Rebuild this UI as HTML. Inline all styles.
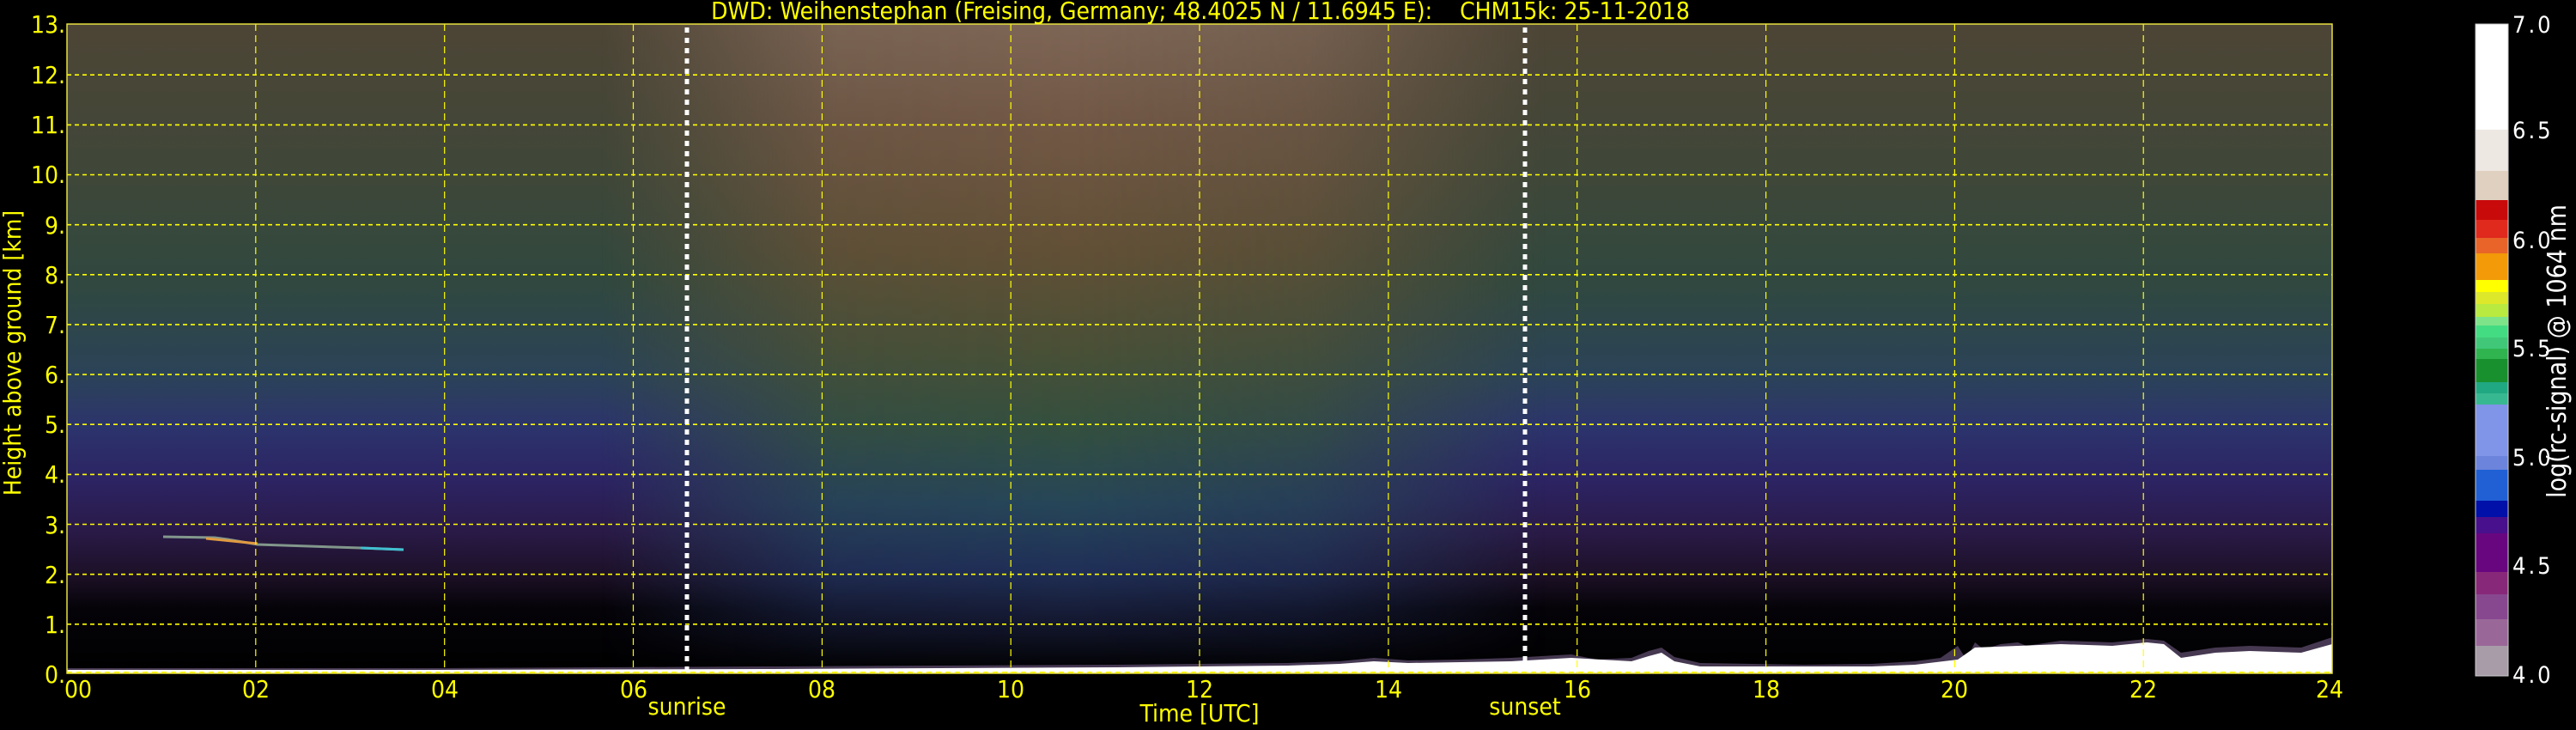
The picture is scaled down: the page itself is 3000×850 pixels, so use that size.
<!DOCTYPE html>
<html><head><meta charset="utf-8"><style>
html,body{margin:0;padding:0;background:#000;width:3000px;height:850px;overflow:hidden}
svg text{font-family:"DejaVu Sans Condensed","DejaVu Sans","Liberation Sans",sans-serif;font-stretch:condensed}
</style></head><body>
<svg width="3000" height="850" viewBox="0 0 3000 850" xmlns="http://www.w3.org/2000/svg">
<defs>
<linearGradient id="bg" x1="0" y1="28" x2="0" y2="784" gradientUnits="userSpaceOnUse">
<stop offset="0" stop-color="#4d4536"/>
<stop offset="0.23" stop-color="#3f4738"/>
<stop offset="0.40" stop-color="#30483f"/>
<stop offset="0.54" stop-color="#2b4358"/>
<stop offset="0.62" stop-color="#2c346c"/>
<stop offset="0.70" stop-color="#2c2464"/>
<stop offset="0.78" stop-color="#2a1a48"/>
<stop offset="0.85" stop-color="#1c1026"/>
<stop offset="0.90" stop-color="#050308"/>
<stop offset="1" stop-color="#000"/>
</linearGradient>
<linearGradient id="cen" x1="0" y1="28" x2="0" y2="784" gradientUnits="userSpaceOnUse">
<stop offset="0" stop-color="#7e6656"/>
<stop offset="0.15" stop-color="#725846"/>
<stop offset="0.35" stop-color="#625036"/>
<stop offset="0.50" stop-color="#4a5036"/>
<stop offset="0.62" stop-color="#34503e"/>
<stop offset="0.74" stop-color="#264658"/>
<stop offset="0.84" stop-color="#203058"/>
<stop offset="0.92" stop-color="#141830"/>
<stop offset="1" stop-color="#000"/>
</linearGradient>
<linearGradient id="hm" x1="700" y1="0" x2="1800" y2="0" gradientUnits="userSpaceOnUse">
<stop offset="0" stop-color="#fff" stop-opacity="0"/>
<stop offset="0.25" stop-color="#fff" stop-opacity="0.9"/>
<stop offset="0.5" stop-color="#fff" stop-opacity="1"/>
<stop offset="0.75" stop-color="#fff" stop-opacity="0.8"/>
<stop offset="1" stop-color="#fff" stop-opacity="0"/>
</linearGradient>
<mask id="m"><rect x="700" y="28" width="1100" height="756" fill="url(#hm)"/></mask>
</defs>

<rect x="78" y="28" width="2638" height="756" fill="url(#bg)"/>
<rect x="700" y="28" width="1100" height="756" fill="url(#cen)" mask="url(#m)"/>

<!-- cloud streak -->
<path d="M190 625 L250 626 L265 628 L300 634 L360 636 L420 638 L470 640" stroke="#9ab8a0" stroke-width="3" fill="none" opacity="0.8"/>
<path d="M240 627 L300 633" stroke="#e09a40" stroke-width="3" fill="none"/>
<path d="M420 638 L470 640" stroke="#40c0d0" stroke-width="3" fill="none"/>

<!-- ground layer -->
<path d="M78 784 L78 778 L500 778 L900 776 L1300 774 L1500 772 L1560 770 L1600 766 L1640 769 L1700 768 L1760 766 L1830 762 L1860 768 L1900 766 L1920 758 L1935 754 L1950 765 L1980 772 L2100 774 L2180 773 L2230 770 L2260 766 L2280 752 L2290 768 L2300 748 L2310 756 L2330 750 L2350 748 L2360 752 L2400 746 L2460 748 L2500 744 L2520 746 L2540 760 L2580 754 L2620 752 L2680 754 L2716 742 L2716 784 Z" fill="#8a70a0" opacity="0.5"/>
<path d="M78 784 L78 780 L500 780 L900 779 L1300 777 L1500 775 L1560 773 L1600 770 L1640 772 L1760 770 L1830 766 L1900 770 L1920 764 L1935 760 L1950 770 L1980 776 L2180 776 L2230 774 L2280 768 L2300 754 L2350 752 L2400 750 L2460 752 L2500 748 L2520 750 L2540 766 L2580 760 L2620 758 L2680 760 L2716 750 L2716 784 Z" fill="#fff"/>

<!-- grid -->
<g stroke="#ffff00" stroke-width="1.6" stroke-dasharray="5 4" fill="none">
<path d="M78 726.8H2716M78 668.7H2716M78 610.5H2716M78 552.4H2716M78 494.2H2716M78 436.1H2716M78 377.9H2716M78 319.8H2716M78 261.7H2716M78 203.5H2716M78 145.4H2716M78 87.2H2716"/>
</g>
<g stroke="#ffff00" stroke-width="1.2" stroke-dasharray="8 5" fill="none">
<path d="M297.8 28V784M517.7 28V784M737.5 28V784M957.4 28V784M1177.2 28V784M1397 28V784M1616.9 28V784M1836.7 28V784M2056.6 28V784M2276.4 28V784M2496.2 28V784"/>
</g>
<path d="M78 783H2716" stroke="#ffff00" stroke-width="2" stroke-dasharray="6 5"/>
<rect x="78" y="28" width="2638" height="756" fill="none" stroke="#e8e040" stroke-width="1.5"/>

<g stroke="#fff" stroke-width="5" stroke-dasharray="6 6">
<path d="M800 32V782"/><path d="M1776 32V782"/>
</g>

<text x="1398" y="22" fill="#ffff00" font-size="28" text-anchor="middle" xml:space="preserve">DWD: Weihenstephan (Freising, Germany; 48.4025 N / 11.6945 E):    CHM15k: 25-11-2018</text>

<g fill="#ffff00" font-size="28" text-anchor="end">
<text x="76" y="38">13.</text><text x="76" y="97">12.</text><text x="76" y="155">11.</text><text x="76" y="213">10.</text>
<text x="76" y="272">9.</text><text x="76" y="330">8.</text><text x="76" y="388">7.</text><text x="76" y="446">6.</text>
<text x="76" y="504">5.</text><text x="76" y="562">4.</text><text x="76" y="621">3.</text><text x="76" y="679">2.</text>
<text x="76" y="737">1.</text><text x="76" y="795">0.</text>
</g>
<text transform="translate(24 411) rotate(-90)" fill="#ffff00" font-size="28" text-anchor="middle">Height above ground [km]</text>

<g fill="#ffff00" font-size="28" text-anchor="middle">
<text x="91" y="812">00</text><text x="298" y="812">02</text><text x="518" y="812">04</text><text x="738" y="812">06</text>
<text x="957" y="812">08</text><text x="1177" y="812">10</text><text x="1397" y="812">12</text><text x="1617" y="812">14</text>
<text x="1837" y="812">16</text><text x="2057" y="812">18</text><text x="2276" y="812">20</text><text x="2496" y="812">22</text>
<text x="2713" y="812">24</text>
<text x="800" y="832">sunrise</text><text x="1776" y="832">sunset</text>
<text x="1397" y="840">Time [UTC]</text>
</g>

<g>
<rect x="2883" y="28" width="38" height="123" fill="#fff"/>
<rect x="2883" y="151" width="38" height="48" fill="#ede8e2"/>
<rect x="2883" y="199" width="38" height="34" fill="#e0d0c0"/>
<rect x="2883" y="233" width="38" height="23" fill="#c80a0a"/>
<rect x="2883" y="256" width="38" height="21" fill="#e02a1e"/>
<rect x="2883" y="277" width="38" height="18" fill="#e86428"/>
<rect x="2883" y="295" width="38" height="31" fill="#f29a08"/>
<rect x="2883" y="326" width="38" height="14" fill="#ffff00"/>
<rect x="2883" y="340" width="38" height="14" fill="#dde82a"/>
<rect x="2883" y="354" width="38" height="15" fill="#b8ea40"/>
<rect x="2883" y="369" width="38" height="10" fill="#7ee48a"/>
<rect x="2883" y="379" width="38" height="14" fill="#44dc82"/>
<rect x="2883" y="393" width="38" height="13" fill="#40c878"/>
<rect x="2883" y="406" width="38" height="12" fill="#30b450"/>
<rect x="2883" y="418" width="38" height="27" fill="#18902e"/>
<rect x="2883" y="445" width="38" height="13" fill="#20a882"/>
<rect x="2883" y="458" width="38" height="13" fill="#38b890"/>
<rect x="2883" y="471" width="38" height="60" fill="#8094e8"/>
<rect x="2883" y="531" width="38" height="16" fill="#6c84dc"/>
<rect x="2883" y="547" width="38" height="36" fill="#2060d4"/>
<rect x="2883" y="583" width="38" height="19" fill="#0010a8"/>
<rect x="2883" y="602" width="38" height="19" fill="#48108c"/>
<rect x="2883" y="621" width="38" height="45" fill="#680680"/>
<rect x="2883" y="666" width="38" height="26" fill="#882878"/>
<rect x="2883" y="692" width="38" height="29" fill="#884890"/>
<rect x="2883" y="721" width="38" height="31" fill="#9a6898"/>
<rect x="2883" y="752" width="38" height="35" fill="#a89ca8"/>
<rect x="2883" y="28" width="38" height="759" fill="none" stroke="#ccc" stroke-width="1"/>
</g>
<g fill="#fff" font-size="27" font-family="DejaVu Sans" style="font-stretch:normal;letter-spacing:3px">
<text x="2926" y="38">7.0</text><text x="2926" y="161">6.5</text><text x="2926" y="289">6.0</text>
<text x="2926" y="415">5.5</text><text x="2926" y="542">5.0</text><text x="2926" y="668">4.5</text><text x="2926" y="795">4.0</text>
</g>
<text transform="translate(2988 409) rotate(-90)" fill="#fff" font-size="30" text-anchor="middle">log(rc-signal) @ 1064 nm</text>
</svg>
</body></html>
